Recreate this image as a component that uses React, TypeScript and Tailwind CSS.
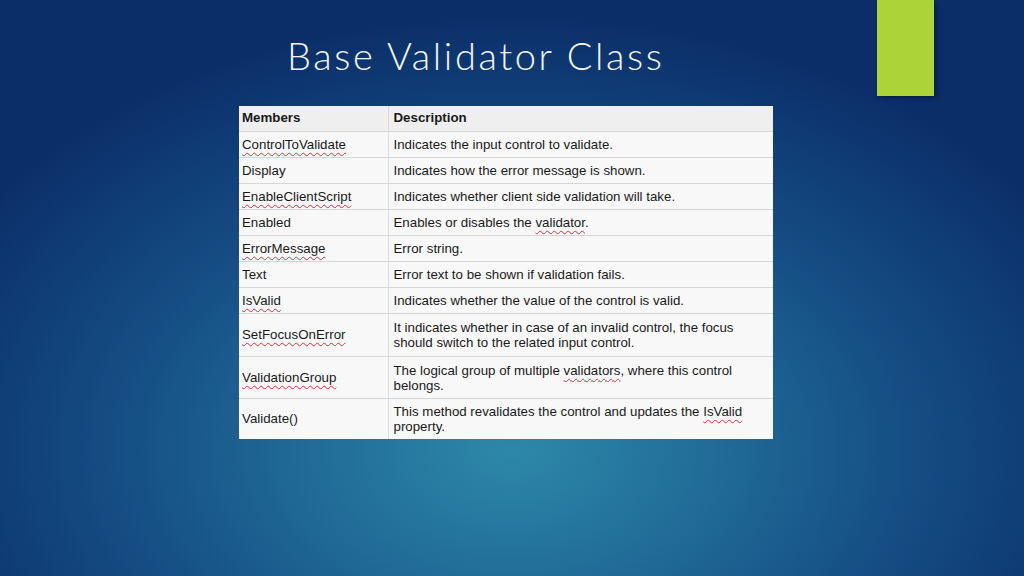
const rows: { name: string; spell?: boolean; desc: React.ReactNode; tall?: string }[] = [
  { name: "ControlToValidate", spell: true, desc: "Indicates the input control to validate." },
  { name: "Display", desc: "Indicates how the error message is shown." },
  { name: "EnableClientScript", spell: true, desc: "Indicates whether client side validation will take." },
  {
    name: "Enabled",
    desc: (
      <>
        Enables or disables the <Spell>validator</Spell>.
      </>
    ),
  },
  { name: "ErrorMessage", spell: true, desc: "Error string." },
  { name: "Text", desc: "Error text to be shown if validation fails." },
  { name: "IsValid", spell: true, desc: "Indicates whether the value of the control is valid." },
  {
    name: "SetFocusOnError",
    spell: true,
    tall: "h-[43px]",
    desc: "It indicates whether in case of an invalid control, the focus should switch to the related input control.",
  },
  {
    name: "ValidationGroup",
    spell: true,
    tall: "h-[42px]",
    desc: (
      <>
        The logical group of multiple <Spell>validators</Spell>, where this control belongs.
      </>
    ),
  },
  {
    name: "Validate()",
    tall: "h-[41px]",
    desc: (
      <>
        This method revalidates the control and updates the <Spell>IsValid</Spell> property.
      </>
    ),
  },
];

function Spell({ children }: { children: React.ReactNode }) {
  return (
    <span className="underline decoration-wavy decoration-[#e0303a] decoration-1 underline-offset-[3px]">
      {children}
    </span>
  );
}

export default function App() {
  return (
    <div className="relative w-[1024px] h-[576px] overflow-hidden bg-[radial-gradient(ellipse_70%_85%_at_50%_78%,#2d88a9_0%,#226f9a_25%,#154e84_55%,#0b2d68_90%)] font-['Liberation_Sans',Arial,sans-serif]">
      {/* accent block */}
      <div className="absolute left-[877px] top-0 w-[57px] h-[96px] bg-[#acd337] shadow-[2px_2px_4px_rgba(0,0,0,0.35)]" />

      <div className="flex flex-col">
        <h1 className="ml-[287px] mt-[32px] text-[38px] leading-[46px] font-light text-[#f2f5f8] font-['Lato','DejaVu_Sans',sans-serif] tracking-[2.6px]">
          Base Validator Class
        </h1>

        <table className="ml-[239px] mt-[28px] w-[534px] table-fixed border-collapse bg-[#f8f8f8] text-[13.3px] text-[#1a1a1a]">
          <colgroup>
            <col className="w-[149px]" />
            <col />
          </colgroup>
          <thead>
            <tr className="h-[25px] bg-[#efefef]">
              <th className="pl-[3px] text-left font-bold border-r border-[#dcdcdc]">Members</th>
              <th className="pl-[5px] text-left font-bold">Description</th>
            </tr>
          </thead>
          <tbody>
            {rows.map((r) => (
              <tr key={r.name} className={`${r.tall ?? "h-[26px]"} border-t border-[#d6d6d6]`}>
                <td className="pl-[3px] pt-[1px] border-r border-[#dcdcdc] align-middle">
                  {r.spell ? <Spell>{r.name}</Spell> : r.name}
                </td>
                <td className="pl-[5px] pr-[8px] pt-[1px] align-middle leading-[15px]">{r.desc}</td>
              </tr>
            ))}
          </tbody>
        </table>
      </div>
    </div>
  );
}
